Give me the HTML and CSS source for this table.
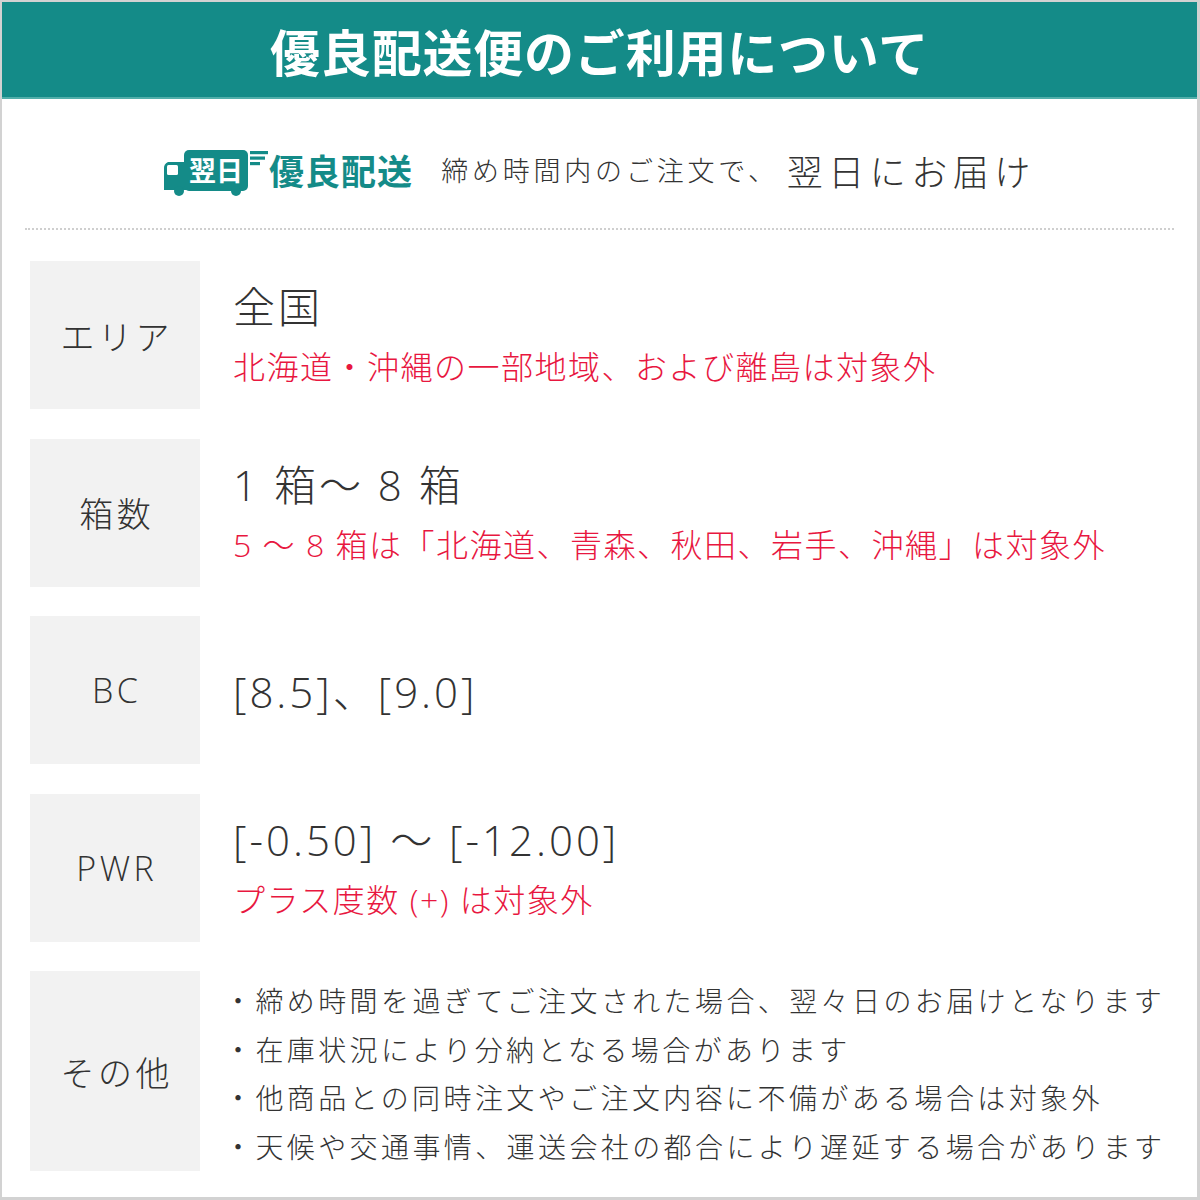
FILE: index.html
```html
<!DOCTYPE html>
<html lang="ja">
<head>
<meta charset="utf-8">
<link rel="stylesheet" href="styles.css">
</head>
<body>
<div class="frame">
  <header class="title">優良配送便のご利用について</header>
  <section class="intro">
    <div class="logo">
      <svg class="truck" width="106" height="50" viewBox="0 0 106 50">
        <path d="M5 15 h16 a3 3 0 0 1 3 3 v25 h-23 v-21 a7 7 0 0 1 4 -7 z" fill="#148b88"/>
        <rect x="4" y="18" width="11" height="10" rx="1.5" fill="#fff"/>
        <rect x="21" y="3" width="64" height="41" rx="5" fill="#148b88"/>
        <circle cx="16" cy="44" r="5" fill="#148b88"/>
        <circle cx="73" cy="44" r="5" fill="#148b88"/>
        <text x="53" y="34" text-anchor="middle" class="truck-text">翌日</text>
        <rect x="87" y="4" width="18" height="3.2" fill="#148b88"/>
        <rect x="87" y="9.5" width="15" height="3.2" fill="#148b88"/>
        <rect x="87" y="15" width="10" height="3.2" fill="#148b88"/>
      </svg>
      <span class="logo-text">優良配送</span>
    </div>
    <span class="intro-small">締め時間内のご注文で、</span>
    <span class="intro-large">翌日にお届け</span>
  </section>
  <div class="divider"></div>
  <div class="rows">
    <div class="row">
      <div class="label">エリア</div>
      <div class="content">
        <p class="main">全国</p>
        <p class="note">北海道・沖縄の一部地域、および離島は対象外</p>
      </div>
    </div>
    <div class="row">
      <div class="label">箱数</div>
      <div class="content">
        <p class="main">1 箱〜 8 箱</p>
        <p class="note">5 〜 8 箱は「北海道、青森、秋田、岩手、沖縄」は対象外</p>
      </div>
    </div>
    <div class="row">
      <div class="label">BC</div>
      <div class="content">
        <p class="main">[8.5]、[9.0]</p>
      </div>
    </div>
    <div class="row">
      <div class="label">PWR</div>
      <div class="content">
        <p class="main">[-0.50] 〜 [-12.00]</p>
        <p class="note">プラス度数 (+) は対象外</p>
      </div>
    </div>
    <div class="row row-tall">
      <div class="label">その他</div>
      <div class="content">
        <p class="bullet">・締め時間を過ぎてご注文された場合、翌々日のお届けとなります</p>
        <p class="bullet">・在庫状況により分納となる場合があります</p>
        <p class="bullet">・他商品との同時注文やご注文内容に不備がある場合は対象外</p>
        <p class="bullet">・天候や交通事情、運送会社の都合により遅延する場合があります</p>
      </div>
    </div>
  </div>
</div>
</body>
</html>
```

FILE: styles.css
```css
html, body {
  margin: 0;
  padding: 0;
  background: #fff;
}
body {
  font-family: "Noto Sans CJK JP", "Noto Sans", sans-serif;
  font-weight: 300;
  color: #333;
}
.frame {
  width: 1200px;
  height: 1200px;
  box-sizing: border-box;
  border: 2px solid #d2d2d2;
  border-right-width: 3px;
  border-bottom-width: 3px;
  display: flex;
  flex-direction: column;
}
.title {
  height: 95px;
  background: #148b88;
  border-bottom: 2px solid #52aeaa;
  color: #fff;
  font-weight: 700;
  font-size: 50px;
  letter-spacing: 0.8px;
  display: flex;
  align-items: center;
  justify-content: center;
  line-height: 1;
}
.intro {
  height: 129px;
  box-sizing: border-box;
  padding: 12px 0 0 0;
  display: flex;
  align-items: center;
  justify-content: center;
}
.logo {
  display: flex;
  align-items: center;
  margin-right: 28px;
}
.truck {
  display: block;
  margin-top: 4px;
}
.truck-text {
  font-family: "Noto Sans CJK JP", sans-serif;
  font-weight: 700;
  font-size: 27px;
  fill: #fff;
}
.logo-text {
  color: #148b88;
  font-weight: 700;
  font-size: 35px;
  letter-spacing: 1px;
}
.intro-small {
  font-size: 27px;
  letter-spacing: 3.8px;
  margin-right: 8px;
}
.intro-large {
  font-size: 36px;
  letter-spacing: 5.5px;
}
.divider {
  margin: 0 23px;
  border-top: 2px dotted #cfcfcf;
}
.rows {
  display: flex;
  flex-direction: column;
  gap: 29.5px;
  padding: 31px 0 0 28px;
}
.row {
  display: grid;
  grid-template-columns: 170px 1fr;
  column-gap: 33px;
  height: 148px;
}
.row-tall {
  height: 200px;
}
.label {
  background: #f2f2f2;
  display: flex;
  align-items: center;
  justify-content: center;
  font-family: "Open Sans", "Noto Sans CJK JP", sans-serif;
  font-size: 34px;
  letter-spacing: 3.5px;
  padding-left: 3.5px;
}
.content {
  display: flex;
  flex-direction: column;
  justify-content: center;
  padding-top: 4px;
}
.content p {
  margin: 0;
}
.main {
  font-family: "Open Sans", "Noto Sans CJK JP", sans-serif;
  font-size: 42px;
  letter-spacing: 3px;
  line-height: 60px;
}
.note {
  font-family: "Open Sans", "Noto Sans CJK JP", sans-serif;
  color: #e8173f;
  font-size: 32px;
  letter-spacing: 1.5px;
  line-height: 60px;
}
.content .bullet {
  font-size: 28px;
  letter-spacing: 3.4px;
  line-height: 48.5px;
  margin-left: -9px;
}
```
